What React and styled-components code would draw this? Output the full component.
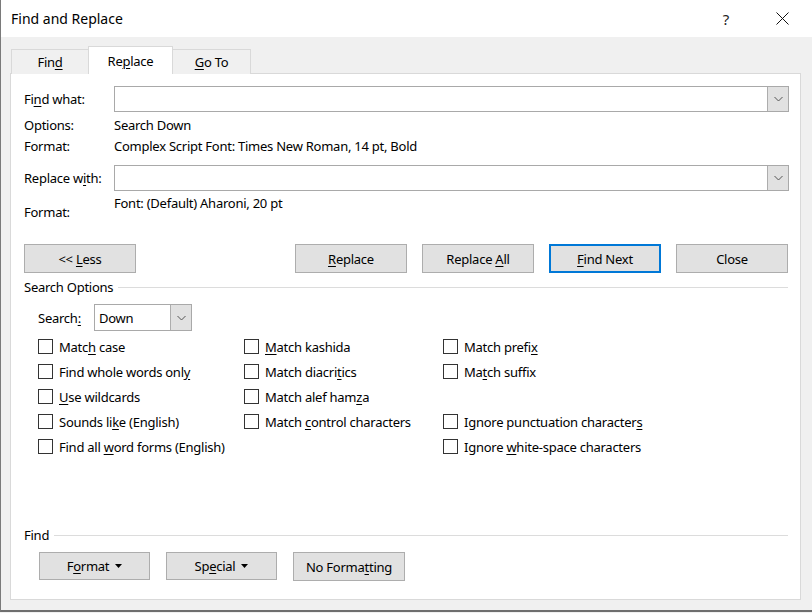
import React from 'react'
import styled, { createGlobalStyle } from 'styled-components'

const GlobalStyle = createGlobalStyle`
  html, body {
    margin: 0;
    padding: 0;
    background: #f0f0f0;
  }
  body {
    font-family: "Noto Sans", "Open Sans", sans-serif;
    font-size: 13px;
    letter-spacing: -0.25px;
    color: #000;
  }
  * { box-sizing: border-box; }
`

const Window = styled.div`
  width: 812px;
  height: 612px;
  display: flex;
  flex-direction: column;
  background: #f0f0f0;
  border-left: 1px solid #7a7a7a;
  border-bottom: 2px solid #6e6e6e;
`

const TitleBar = styled.div`
  height: 37px;
  flex: none;
  display: flex;
  align-items: center;
  background: #fff;
  padding-left: 10px;
  padding-right: 15px;
  font-size: 14px;
  letter-spacing: 0;
  white-space: nowrap;
`

const TitleButton = styled.div`
  width: 30px;
  height: 30px;
  display: flex;
  align-items: center;
  justify-content: center;
  font-size: 15px;
  color: #222;
  margin-left: ${p => p.$ml || '0'};
`

const Body = styled.div`
  flex: 1;
  display: flex;
  flex-direction: column;
  padding: 9px 11px 10px 9px;
`

const TabStrip = styled.div`
  display: flex;
  align-items: flex-end;
  height: 28px;
  padding-left: 2px;
  margin-bottom: -1px;
`

const Tab = styled.div`
  width: ${p => p.$w}px;
  height: ${p => (p.$active ? 28 : 25)}px;
  display: flex;
  align-items: center;
  justify-content: center;
  padding-top: ${p => (p.$active ? 1 : 0)}px;
  border: 1px solid #d9d9d9;
  border-bottom: none;
  margin-left: -1px;
  background: ${p => (p.$active ? '#fff' : '#f0f0f0')};
  position: relative;
  z-index: ${p => (p.$active ? 2 : 0)};
`

const Panel = styled.div`
  flex: 1;
  display: flex;
  flex-direction: column;
  background: #fff;
  border: 1px solid #d9d9d9;
  padding: 12px 12px 18px 13px;
`

const FieldRow = styled.div`
  display: grid;
  grid-template-columns: 90px 1fr;
  align-items: center;
  height: ${p => p.$h}px;
  margin-top: ${p => p.$mt || 0}px;
`

const FormatRow = styled.div`
  display: grid;
  grid-template-columns: 90px 1fr;
  height: 30px;
  line-height: 18px;
`

const FormatLabel = styled.div`
  align-self: end;
`

const FormatValue = styled.div`
  align-self: start;
  padding-top: 3px;
`

const Combo = styled.div`
  height: ${p => p.$h || 26}px;
  width: ${p => (p.$w ? `${p.$w}px` : 'auto')};
  margin-right: ${p => (p.$w ? 0 : -1)}px;
  display: flex;
  border: 1px solid #a9a9a9;
  background: #fff;
`

const ComboText = styled.div`
  flex: 1;
  display: flex;
  align-items: center;
  padding-left: 4px;
`

const ComboButton = styled.div`
  width: 21px;
  display: flex;
  align-items: center;
  justify-content: center;
  background: #e1e1e1;
  border-left: 1px solid #adadad;
`

const ButtonRow = styled.div`
  display: flex;
  justify-content: space-between;
  margin-top: 23px;
`

const ButtonGroup = styled.div`
  display: flex;
  gap: ${p => p.$gap || 15}px;
  padding-left: ${p => p.$pl || 0}px;
  margin-top: ${p => p.$mt || 0}px;
`

const Button = styled.div`
  width: ${p => p.$w || 112}px;
  height: ${p => p.$h || 29}px;
  display: flex;
  align-items: center;
  justify-content: center;
  gap: 6px;
  background: #e1e1e1;
  border: ${p => (p.$primary ? '2px solid #0078d7' : '1px solid #adadad')};
`

const Legend = styled.div`
  display: flex;
  align-items: center;
  gap: 5px;
  line-height: 18px;
  margin-top: ${p => p.$mt || 0}px;

  &::after {
    content: "";
    flex: 1;
    height: 1px;
    background: #dcdcdc;
  }
`

const SearchRow = styled.div`
  display: flex;
  align-items: center;
  margin-top: 8px;
  padding-left: 14px;
`

const SearchLabel = styled.div`
  width: 56px;
`

const OptionGrid = styled.div`
  display: grid;
  grid-template-columns: 206px 199px 1fr;
  grid-template-rows: repeat(5, 25px);
  grid-auto-flow: column;
  margin-top: 3px;
  padding-left: 14px;
`

const Check = styled.div`
  display: flex;
  align-items: center;
  gap: 6px;
`

const Box = styled.div`
  width: 15px;
  height: 15px;
  border: 1px solid #333;
  background: #fff;
  flex: none;
`

const FindSection = styled.div`
  margin-top: auto;
`

const U = styled.span`
  text-decoration: underline;
  text-decoration-thickness: 1px;
  text-underline-offset: 2px;
`

const Mn = ({ t, i }) =>
  i == null ? <span>{t}</span> : (
    <span>
      {t.slice(0, i)}
      <U>{t[i]}</U>
      {t.slice(i + 1)}
    </span>
  )

const Chevron = () => (
  <svg width="9" height="6" viewBox="0 0 9 6">
    <path d="M0.5 1 L4.5 5 L8.5 1" fill="none" stroke="#555" strokeWidth="1" />
  </svg>
)

const Caret = () => (
  <svg width="7" height="4" viewBox="0 0 7 4">
    <path d="M0 0 H7 L3.5 4 Z" fill="#000" />
  </svg>
)

const CloseIcon = () => (
  <svg width="13" height="13" viewBox="0 0 13 13">
    <path d="M0.5 0.5 L12.5 12.5 M12.5 0.5 L0.5 12.5" stroke="#111" strokeWidth="1" />
  </svg>
)

const options = [
  ['Match case', 4],
  ['Find whole words only', 20],
  ['Use wildcards', 0],
  ['Sounds like (English)', 9],
  ['Find all word forms (English)', 9],
  ['Match kashida', 0],
  ['Match diacritics', 12],
  ['Match alef hamza', 14],
  ['Match control characters', 6],
  null,
  ['Match prefix', 11],
  ['Match suffix', 2],
  null,
  ['Ignore punctuation characters', 28],
  ['Ignore white-space characters', 7],
]

export default function App() {
  return (
    <>
      <GlobalStyle />
      <Window>
        <TitleBar>
          <span>Find and Replace</span>
          <TitleButton $ml="auto">?</TitleButton>
          <TitleButton $ml="26px"><CloseIcon /></TitleButton>
        </TitleBar>
        <Body>
          <TabStrip>
            <Tab $w={78}><Mn t="Find" i={3} /></Tab>
            <Tab $w={85} $active><Mn t="Replace" i={2} /></Tab>
            <Tab $w={79}><Mn t="Go To" i={0} /></Tab>
          </TabStrip>
          <Panel>
            <FieldRow $h={26}>
              <Mn t="Find what:" i={2} />
              <Combo>
                <ComboText />
                <ComboButton><Chevron /></ComboButton>
              </Combo>
            </FieldRow>
            <FieldRow $h={21} $mt={2}>
              <div>Options:</div>
              <div>Search Down</div>
            </FieldRow>
            <FieldRow $h={21}>
              <div>Format:</div>
              <div>Complex Script Font: Times New Roman, 14 pt, Bold</div>
            </FieldRow>
            <FieldRow $h={26} $mt={9}>
              <Mn t="Replace with:" i={9} />
              <Combo>
                <ComboText />
                <ComboButton><Chevron /></ComboButton>
              </Combo>
            </FieldRow>
            <FormatRow>
              <FormatLabel>Format:</FormatLabel>
              <FormatValue>Font: (Default) Aharoni, 20 pt</FormatValue>
            </FormatRow>

            <ButtonRow>
              <Button><Mn t="<< Less" i={3} /></Button>
              <ButtonGroup>
                <Button><Mn t="Replace" i={0} /></Button>
                <Button><Mn t="Replace All" i={8} /></Button>
                <Button $primary><Mn t="Find Next" i={0} /></Button>
                <Button>Close</Button>
              </ButtonGroup>
            </ButtonRow>

            <Legend $mt={5}>Search Options</Legend>
            <SearchRow>
              <SearchLabel><Mn t="Search:" i={6} /></SearchLabel>
              <Combo $w={98} $h={27}>
                <ComboText>Down</ComboText>
                <ComboButton><Chevron /></ComboButton>
              </Combo>
            </SearchRow>

            <OptionGrid>
              {options.map((o, n) =>
                o ? (
                  <Check key={n}>
                    <Box />
                    <Mn t={o[0]} i={o[1]} />
                  </Check>
                ) : (
                  <div key={n} />
                )
              )}
            </OptionGrid>

            <FindSection>
              <Legend>Find</Legend>
              <ButtonGroup $pl={15} $gap={16} $mt={8}>
                <Button $w={111} $h={28}><Mn t="Format" i={1} /><Caret /></Button>
                <Button $w={111} $h={28}><Mn t="Special" i={2} /><Caret /></Button>
                <Button $w={112} $h={29}><Mn t="No Formatting" i={8} /></Button>
              </ButtonGroup>
            </FindSection>
          </Panel>
        </Body>
      </Window>
    </>
  )
}
